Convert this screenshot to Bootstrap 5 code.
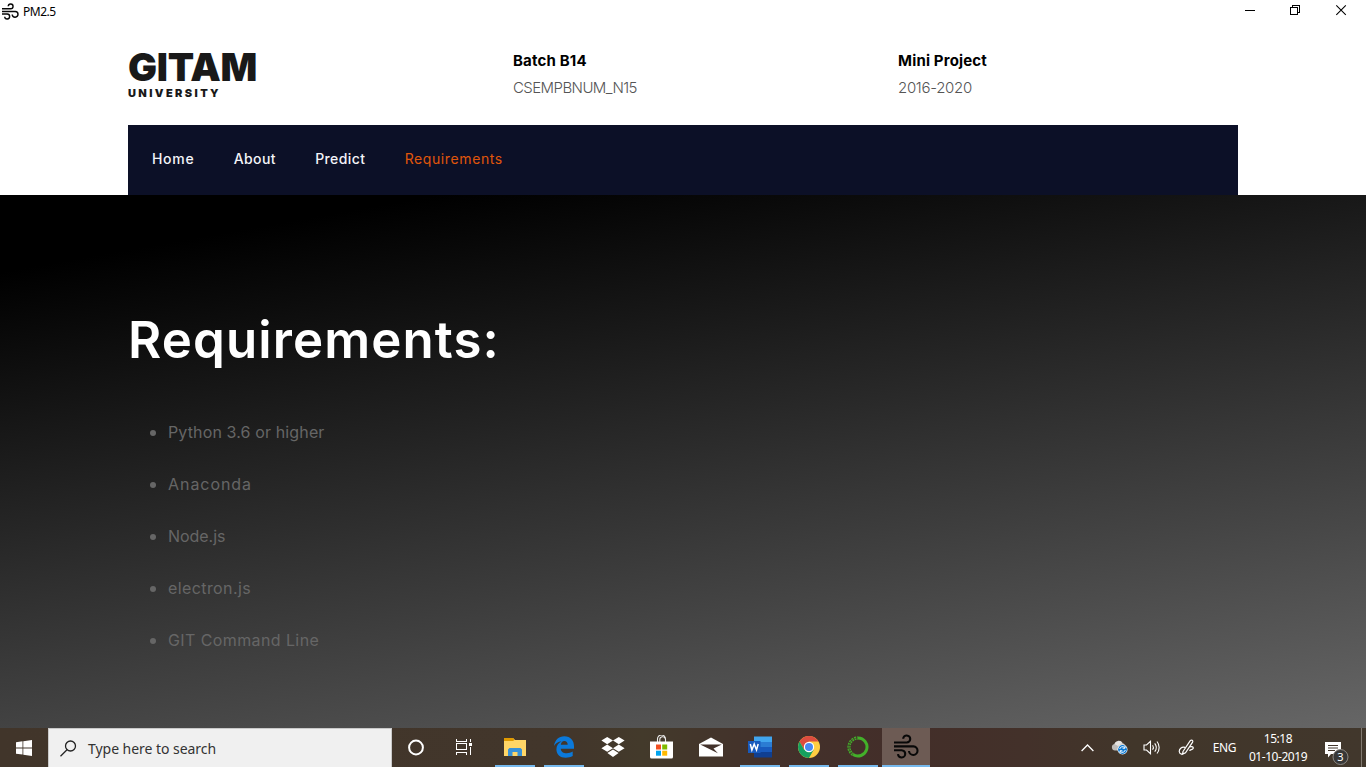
<!DOCTYPE html>
<html lang="en">
<head>
<meta charset="utf-8">
<meta name="viewport" content="width=device-width, initial-scale=1">
<title>PM2.5</title>
<link href="https://cdn.jsdelivr.net/npm/bootstrap@5.3.0/dist/css/bootstrap.min.css" rel="stylesheet">
<style>
  html, body { height: 100%; overflow: hidden; }
  body { font-family: Inter, "Liberation Sans", sans-serif; background: #fff; color: #000; }
  svg { display: block; flex: none; }
  .ui-font { font-family: "Noto Sans", "Open Sans", sans-serif; }
  .window-bar { height: 23px; font-size: 12px; line-height: 23px; letter-spacing: -.5px; padding-left: 2px; }
  .page-box { --bs-gutter-x: 30px; }
  .info-row { --bs-gutter-x: 45px; height: 102px; padding-top: 24px; }
  .brand-name { font-size: 38.5px; line-height: 41px; font-weight: 900; letter-spacing: -.3px; color: #191919; height: 40px; }
  .brand-sub { font-size: 11px; line-height: 12px; font-weight: 900; letter-spacing: 2.4px; color: #191919; }
  .info-title { font-size: 15px; line-height: 27px; font-weight: 700; letter-spacing: .17px; }
  .info-text { font-size: 15px; line-height: 27px; font-weight: 300; letter-spacing: -.3px; color: #555; }
  .info-text.batch-code { letter-spacing: -.57px; }
  .main-nav { height: 70px; background: #0c1027; padding-left: 24px; gap: 39.3px; }
  .main-nav .nav-link { padding: 0; line-height: 68px; font-size: 14px; font-weight: 500; letter-spacing: .4px; color: #f4f4f8; }
  .main-nav .nav-link:first-child { letter-spacing: .7px; }
  .main-nav .nav-link.active { color: #e0560b; font-weight: 400; letter-spacing: .6px; }
  .hero { background: linear-gradient(170deg, #000 10%, #666 100%); }
  .hero h1 { font-size: 51px; line-height: 60px; font-weight: 600; letter-spacing: 1.1px; margin: 115px 0 0; color: #fff; }
  .req-list { margin: 36px 0 0; padding-left: 40px; color: #666; font-size: 16px; list-style: none; }
  .req-list li { display: flex; align-items: center; line-height: 52px; height: 52px; letter-spacing: .13px; }
  .req-list li::before { content: ""; width: 6px; height: 6px; border-radius: 50%; background: #666; margin: 2px 12px 0 -18px; }
  .req-list li:nth-child(2) { letter-spacing: .95px; }
  .req-list li:nth-child(3) { letter-spacing: -.05px; }
  .req-list li:nth-child(n+4) { letter-spacing: .4px; }
  .taskbar { height: 39px; color: #fff; background: linear-gradient(90deg, #41352a 0, #42362b 42%, #433a2b 47%, #43312b 56%, #432e29 66%, #43312a 75%, #41362a 83%, #41372c 100%); }
  .start-btn { width: 48px; }
  .search-box { width: 344px; background: #f0f0f0; color: #333; border: 1px solid #c9c9c9; border-bottom: 0; font-size: 14px; padding-left: 11px; gap: 11px; letter-spacing: -.04px; }
  .task-item { width: 49px; border-bottom: 2px solid transparent; }
  .task-item.cortana { width: 48px; }
  .task-item.task-view { width: 47px; margin-right: 3px; }
  .task-item.running { position: relative; }
  .task-item.running::after { content: ""; position: absolute; left: 5px; right: 4px; bottom: -2px; height: 2px; background: #76b9ed; }
  .task-item.current { background: #6d5b54; width: 48px; }
  .task-item.current::after { left: 0; right: 0; }
  .tray { font-size: 12px; }
  .tray-cell { display: flex; align-items: center; justify-content: center; }
  .lang { letter-spacing: -.4px; }
  .clock { line-height: 18px; width: 70px; text-align: center; letter-spacing: -.45px; }
</style>
</head>
<body class="d-flex flex-column">

<svg width="0" height="0" class="position-absolute" aria-hidden="true">
  <symbol id="wind" viewBox="0 0 24 24">
    <g fill="none" stroke="#080808" stroke-width="2">
      <path d="M0 8.2h12.2a3.4 3.4 0 1 0-3.4-3.6"/>
      <path d="M0 11.9h18.7a4.1 4.1 0 1 1-4.3 4.4"/>
      <path d="M0 15.6h7.4a3.5 3.5 0 1 1-3.6 3.8"/>
    </g>
  </symbol>
</svg>

<div class="window-bar ui-font d-flex align-items-center">
  <svg width="17" height="17"><use href="#wind"/></svg>
  <span class="ms-1">PM2.5</span>
  <div class="ms-auto align-self-start">
    <svg width="121" height="22" viewBox="1245 0 121 22" fill="none" stroke="#000">
      <path d="M1245 10.5h10M1290.500 7.500h7v7h-7zM1292.500 7.500v-2h7v7h-2" shape-rendering="crispEdges"/>
      <path d="M1336.300 5.300l9.500 9.500M1345.800 5.300l-9.500 9.500" stroke-width="1.100"/>
    </svg>
  </div>
</div>

<header class="container page-box">
  <div class="row info-row">
    <div class="col-4">
      <div class="brand-name">GITAM</div>
      <div class="brand-sub">UNIVERSITY</div>
    </div>
    <div class="col-4">
      <div class="info-title">Batch B14</div>
      <div class="info-text batch-code">CSEMPBNUM_N15</div>
    </div>
    <div class="col-4">
      <div class="info-title">Mini Project</div>
      <div class="info-text">2016-2020</div>
    </div>
  </div>
  <nav class="nav main-nav">
    <a class="nav-link" href="#">Home</a>
    <a class="nav-link" href="#">About</a>
    <a class="nav-link" href="#">Predict</a>
    <a class="nav-link active" href="#">Requirements</a>
  </nav>
</header>

<main class="hero flex-grow-1">
  <div class="container page-box">
    <h1>Requirements:</h1>
    <ul class="req-list">
      <li><span>Python 3.6 or higher</span></li>
      <li><span>Anaconda</span></li>
      <li><span>Node.js</span></li>
      <li><span>electron.js</span></li>
      <li><span>GIT Command Line</span></li>
    </ul>
  </div>
</main>

<footer class="taskbar ui-font d-flex flex-shrink-0">
  <div class="start-btn tray-cell">
    <svg width="16" height="16" viewBox="0 0 16 16" fill="#fff"><path d="M0 2.200 6.500 1.300V7.500H0zM7.300 1.200 16 0v7.500H7.300zM0 8.400h6.500v6.200L0 13.700zM7.300 8.400H16V16l-8.700-1.200z"/></svg>
  </div>
  <div class="search-box d-flex align-items-center">
    <svg width="17" height="17" viewBox="0 0 17 17" fill="none" stroke="#222" stroke-width="1.300"><circle cx="10.500" cy="6" r="5"/><path d="M7 9.700.5 16.200"/></svg>
    <span class="search-label">Type here to search</span>
  </div>

  <div class="task-item tray-cell cortana"><svg width="18" height="18" viewBox="0 0 18 18" fill="none" stroke="#fff" stroke-width="2"><circle cx="9" cy="9.500" r="6.900"/></svg></div>
  <div class="task-item tray-cell task-view">
    <svg width="18" height="18" viewBox="0 0 18 18" fill="none" stroke="#fff" shape-rendering="crispEdges"><path d="M1.500 1v2.500h10V1M1.500 17v-2.500h10V17M1.500 5.500h10v6h-10zM15.500 1v3M15.500 9v8"/><path d="M14 5h3v3h-3z" fill="#fff" stroke="none"/></svg>
  </div>
  <div class="task-item tray-cell running">
    <svg width="22" height="20" viewBox="0 0 22 20"><path d="M0 1h9l2 2h11v16H0z" fill="#ffd667"/><path d="M0 1h9l1.500 2L9 4H0z" fill="#e09a00"/><path d="M4 19v-6.500l1.500-1.500h11l1.500 1.500V19h-4.500v-4h-5v4z" fill="#3892d8"/></svg>
  </div>
  <div class="task-item tray-cell running">
    <svg width="20" height="22" viewBox="0 0 20 22"><path d="M0 10C.9 4 4.800.3 10.300.3 16.700.3 20 4.800 20 10.300v2.400H6.700c.2 3.200 2.900 4.600 6 4.600 2.200 0 4.200-.6 6-1.700v4.500c-2 1.100-4.300 1.700-7 1.700-5.600 0-9.300-3.400-9.300-8.500 0-3.500 2-6.300 5.200-8C4.100 5.600 1.900 7.200 0 10zm6.800-1.300h6.900c0-2.500-1.300-3.800-3.400-3.800-1.900 0-3.200 1.500-3.500 3.800z" fill="#0b79da"/></svg>
  </div>
  <div class="task-item tray-cell">
    <svg width="24" height="22" viewBox="0 0 24 22" fill="#fff"><path d="M6.200 1 12 4.600 6.200 8.300.4 4.600zM17.800 1l5.800 3.600-5.800 3.700L12 4.600zM6.200 8.500l5.800 3.700-5.800 3.600-5.800-3.600zM17.800 8.500l5.800 3.700-5.800 3.600-5.800-3.600zM12 13.400l5.600 3.700L12 20.900l-5.600-3.800z"/></svg>
  </div>
  <div class="task-item tray-cell">
    <svg width="23" height="24" viewBox="0 0 23 24"><path d="M7.500 7V4a4 4 0 0 1 8 0v3M9.800 7V4.500a2.800 2.800 0 0 1 5.400-1" fill="none" stroke="#eee" stroke-width="1.100"/><path d="M0 6.500h23V22a1.500 1.500 0 0 1-1.500 1.500h-20A1.500 1.500 0 0 1 0 22z" fill="#fff"/><path d="M6 9.500h5v5H6z" fill="#f25022"/><path d="M12.200 9.500h5v5h-5z" fill="#7fba00"/><path d="M6 15.700h5v5H6z" fill="#00a4ef"/><path d="M12.200 15.700h5v5h-5z" fill="#ffb900"/></svg>
  </div>
  <div class="task-item tray-cell">
    <svg width="24" height="20" viewBox="0 0 24 20"><path d="M0 7 12 .5 24 7v12.500H0z" fill="#fff"/><path d="M1.200 7.400h21.600L14.500 11.500l4.400 4.700z" fill="#43322b"/></svg>
  </div>
  <div class="task-item tray-cell running">
    <svg width="24" height="22" viewBox="0 0 24 22"><path d="M6 .5h18v6H6z" fill="#41a5ee"/><path d="M6 6h18v5.200H6z" fill="#2b7cd3"/><path d="M6 11h18v5.200H6z" fill="#185abd"/><path d="M6 16h18v5.500H6z" fill="#103f91"/><path d="M0 5h12.500v12H0z" fill="#185abd"/><path d="m2.300 8 1.600 6 2.300-6 2.300 6 1.700-6" fill="none" stroke="#fff" stroke-width="1.500"/></svg>
  </div>
  <div class="task-item tray-cell running">
    <svg width="22" height="22" viewBox="0 0 22 22"><circle cx="11" cy="11" r="11" fill="#ffcd42"/><path d="M1.500 5.500A11 11 0 0 1 20.500 5.500H11L6.200 13.800z" fill="#dc4c3f"/><path d="M1.500 5.500A11 11 0 0 0 11 22l4.700-8.200H6.200z" fill="#15a05f"/><circle cx="11" cy="11" r="5.200" fill="#fff"/><circle cx="11" cy="11" r="4" fill="#4889f4"/></svg>
  </div>
  <div class="task-item tray-cell running">
    <svg width="22" height="22" viewBox="0 0 22 22" fill="none" stroke="#43b02a"><path d="M11 2a9 9 0 1 1-5 16.500" stroke-width="3"/><path d="M6 18.500A9 9 0 0 1 11 2" stroke-width="3.200" stroke-dasharray="1.900 .8"/><path d="M6 18.500A9 9 0 0 1 11 2" stroke="#43312b" stroke-width=".7" stroke-dasharray="1.500 1.200"/></svg>
  </div>
  <div class="task-item tray-cell running current"><svg width="25" height="25"><use href="#wind"/></svg></div>

  <div class="tray d-flex ms-auto">
    <div class="tray-cell" style="width:32px"><svg width="13" height="8" viewBox="0 0 13 8" fill="none" stroke="#fff" stroke-width="1.300"><path d="m.6 7 5.900-6L12.400 7"/></svg></div>
    <div class="tray-cell" style="width:32px">
      <svg width="17" height="15" viewBox="0 0 17 15"><path d="M4 10.500a3.300 3.300 0 0 1-.6-6.500A4.500 4.500 0 0 1 11.500 3 3.600 3.600 0 0 1 14 8l-4 2.500z" fill="#bfbcb9"/><path d="M3.400 4A4.500 4.500 0 0 1 11.500 3L7 6z" fill="#e5e3e1"/><circle cx="11.500" cy="9.500" r="5" fill="#fff"/><circle cx="11.500" cy="9.500" r="4.400" fill="#0878d4"/><path d="M8.700 9a3 3 0 0 1 5-1.500M14.300 10a3 3 0 0 1-5 1.500M14 5.800v2.400h-2.400M9 13.200v-2.400h2.400" fill="none" stroke="#fff"/></svg>
    </div>
    <div class="tray-cell" style="width:33px">
      <svg width="18" height="15" viewBox="0 0 18 15" fill="none" stroke="#fff" stroke-width="1.100"><path d="M1 5h2.500l4-3.700v12.400l-4-3.700H1zM9.600 5.200a4 4 0 0 1 0 4.600M11.700 3.400a6.500 6.500 0 0 1 0 8.200M14 1.500a9.500 9.500 0 0 1 0 12"/></svg>
    </div>
    <div class="tray-cell" style="width:38px">
      <svg width="18" height="17" viewBox="0 0 18 17" fill="none" stroke="#fff" stroke-width="1.200"><path d="M5 12.500 12.300 1.600c1.200-1.200 3 0 2.300 1.500L7.500 13.800 4.500 15.300zM7 8.300C3.500 7.500 1 10 1.300 12.700c.3 2.800 3.800 3.200 5.200 1M11.500 8c2.500-1 4.500.2 3.500 1.600s-2.600.7-3.500 2.200"/></svg>
    </div>
    <div class="tray-cell" style="width:37px"><span class="lang">ENG</span></div>
    <div class="tray-cell clock"><span><span>15:18</span><br><span class="date">01-10-2019</span></span></div>
    <div class="tray-cell" style="width:48px">
      <svg width="26" height="26" viewBox="1324 740 26 26" style="margin-top:12px"><path d="M1325 741h16v12h-10l-3 3.500V753h-3z" fill="#fff"/><path d="M1328 744.500h10M1328 747h10M1328 749.500h7" stroke="#43372c"/><circle cx="1340.500" cy="756" r="7.500" fill="#373737" stroke="#8b8782"/><text x="1340.500" y="760" fill="#fff" font-size="11" text-anchor="middle">3</text></svg>
    </div>
    <div style="width:5px;border-left:1px solid #817970"></div>
  </div>
</footer>
<script src="https://cdn.jsdelivr.net/npm/bootstrap@5.3.0/dist/js/bootstrap.bundle.min.js"></script>
</body>
</html>
